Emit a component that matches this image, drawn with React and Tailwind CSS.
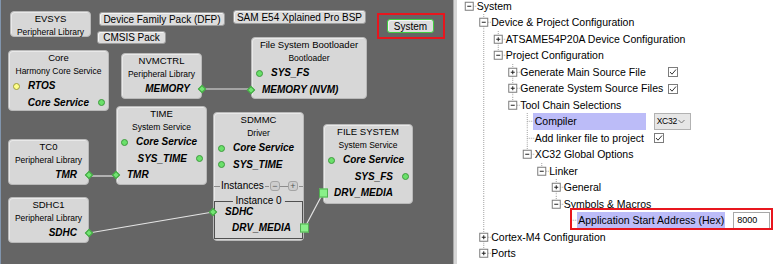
import React from 'react';
import clsx from 'clsx';

const treeRows = [
  { level: 0, kind: 'open', label: 'System' },
  { level: 1, kind: 'open', label: 'Device & Project Configuration' },
  { level: 2, kind: 'closed', label: 'ATSAME54P20A Device Configuration' },
  { level: 2, kind: 'open', label: 'Project Configuration' },
  { level: 3, kind: 'closed', label: 'Generate Main Source File', width: 'w-[148px]', check: true },
  { level: 3, kind: 'closed', label: 'Generate System Source Files', width: 'w-[148px]', check: true },
  { level: 3, kind: 'open', label: 'Tool Chain Selections' },
  { level: 4, kind: 'leaf', label: 'Compiler', width: 'w-[113px]', selected: true, combo: 'XC32' },
  { level: 4, kind: 'leaf', label: 'Add linker file to project', width: 'w-[119px]', check: true },
  { level: 4, kind: 'open', label: 'XC32 Global Options' },
  { level: 5, kind: 'open', label: 'Linker' },
  { level: 6, kind: 'closed', label: 'General' },
  { level: 6, kind: 'open', label: 'Symbols & Macros' },
  { level: 7, kind: 'leaf', label: 'Application Start Address (Hex)', width: 'w-[148px]', selected: true, field: '8000', marked: true },
  { level: 1, kind: 'closed', label: 'Cortex-M4 Configuration' },
  { level: 1, kind: 'closed', label: 'Ports' },
];

// true when a later row sits at `level` before the tree climbs above it
function continues(i, level) {
  for (let j = i + 1; j < treeRows.length; j++) {
    if (treeRows[j].level < level) return false;
    if (treeRows[j].level === level) return true;
  }
  return false;
}

function Guides({ index }) {
  const { level, kind } = treeRows[index];
  const W = 14.5;
  const H = 16.5;
  const mid = 8.25;
  const x = (c) => c * W + 7.25;
  const lines = [];
  for (let c = 0; c < level; c++) {
    if (continues(index, c)) lines.push(<line key={'v' + c} x1={x(c)} x2={x(c)} y1={0} y2={H} />);
  }
  if (level > 0) lines.push(<line key="t" x1={x(level)} x2={x(level)} y1={0} y2={mid} />);
  if (continues(index, level)) lines.push(<line key="b" x1={x(level)} x2={x(level)} y1={mid} y2={H} />);
  lines.push(<line key="h" x1={x(level)} x2={(level + 1) * W} y1={mid} y2={mid} />);

  return (
    <svg width={(level + 1) * W} height={H} className="shrink-0">
      <g stroke="#a3a3a3" strokeDasharray="1 1">{lines}</g>
      {kind !== 'leaf' && (
        <g>
          <rect x={x(level) - 4} y={mid - 4} width={8} height={8} fill="#fff" stroke="#7c7c7c" />
          <line x1={x(level) - 2} x2={x(level) + 2} y1={mid} y2={mid} stroke="#222" />
          {kind === 'closed' && <line x1={x(level)} x2={x(level)} y1={mid - 2} y2={mid + 2} stroke="#222" />}
        </g>
      )}
    </svg>
  );
}

function Check() {
  return (
    <span className="w-[10px] h-[10px] border border-[#7c7c7c] bg-white flex items-center justify-center shrink-0">
      <svg width="8" height="8" viewBox="0 0 8 8">
        <path d="M1 4 L3 6.2 L7 1.5" fill="none" stroke="#333" strokeWidth="1" />
      </svg>
    </span>
  );
}

function TreeRow({ index }) {
  const r = treeRows[index];
  return (
    <div className="relative flex items-center h-[16.5px] pl-[5.25px] text-[10.5px] text-black whitespace-nowrap">
      <Guides index={index} />
      <span
        className={clsx(
          'h-[16.5px] leading-[16.5px] shrink-0',
          r.width,
          r.selected && 'bg-[#bcbcf8]',
          r.selected && (r.level === 7 ? 'ml-[-1px] pl-[1px]' : 'ml-[-2px] pl-[2px]')
        )}
      >
        {r.label}
      </span>
      {r.check && <Check />}
      {r.combo && (
        <span className="ml-[8px] w-[37px] h-[17px] border border-[#b2b2b2] bg-[#e6e6e6] flex items-center pl-[2px] text-[8.5px] tracking-[-0.3px] shrink-0">
          {r.combo}
          <svg className="ml-auto mr-[5px]" width="7" height="5" viewBox="0 0 7 5">
            <path d="M0.5 1 L3.5 4 L6.5 1" fill="none" stroke="#777" strokeWidth="1" />
          </svg>
        </span>
      )}
      {r.field && (
        <span className="ml-[8px] w-[37px] h-[17px] border border-[#a8a8a8] bg-white flex items-center pl-[3px] text-[9px] shrink-0">
          {r.field}
        </span>
      )}
      {r.marked && <span className="absolute left-[113px] top-[-4.25px] w-[203px] h-[22px] border-2 border-[#e8161e]" />}
    </div>
  );
}

function Port({ label, kind = 'circle', side = 'left', row = 'h-[16.5px]', sym }) {
  const text = <span className="text-[10px] font-bold italic leading-none whitespace-nowrap">{label}</span>;
  if (kind === 'circle' || kind === 'yellow') {
    const dot = (
      <span
        className={clsx(
          'w-[7px] h-[7px] rounded-full border shrink-0',
          kind === 'yellow' ? 'bg-[#ffff8a] border-[#9d9d3c]' : 'bg-[#6ae06a] border-[#3f9a3f]'
        )}
      />
    );
    return side === 'left' ? (
      <div className={clsx(row, 'flex items-center pl-[3.5px] gap-[8.5px] shrink-0')}>{dot}{text}</div>
    ) : (
      <div className={clsx(row, 'flex items-center justify-end pr-[3.5px] gap-[8.5px] shrink-0')}>{text}{dot}</div>
    );
  }
  const shape =
    kind === 'diamond'
      ? 'w-[6px] h-[6px] rotate-45 bg-[#72e472] border border-[#3f9f3f]'
      : 'w-[9px] h-[9px] bg-[#8af08a] border border-[#52b052]';
  return (
    <div className={clsx(row, 'relative flex items-center shrink-0', side === 'left' ? 'pl-[10px]' : 'justify-end pr-[11px]')}>
      {text}
      <span className={clsx('absolute top-1/2 -translate-y-1/2', sym, shape)} />
    </div>
  );
}

function Node({ className, title, sub, children }) {
  return (
    <div className={clsx('absolute flex flex-col rounded-[4px] border border-[#b9b9b9] bg-[#d7d7d7] text-black shadow-[inset_1px_1px_0_#e9e9e9]', className)}>
      <div className="h-[13px] shrink-0 text-center text-[9.5px] leading-[13px] whitespace-nowrap">{title}</div>
      <div className="h-[14px] shrink-0 text-center text-[8.5px] leading-[14px] whitespace-nowrap">{sub}</div>
      {children}
    </div>
  );
}

function Btn({ className, children }) {
  return (
    <div className={clsx('absolute flex items-center justify-center rounded-[3px] border bg-[#dcdcdc] text-[10px] text-black whitespace-nowrap shadow-[inset_1px_1px_0_#f3f3f3]', className)}>
      {children}
    </div>
  );
}

function MiniBtn({ children }) {
  return (
    <span className="w-[10px] h-[10px] rounded-[3px] border border-[#a4a4a4] bg-[#cdcdcd] text-[9px] leading-none text-[#555] flex items-center justify-center shrink-0">
      {children}
    </span>
  );
}

export default function App() {
  return (
    <div className="w-[777px] h-[264px] flex overflow-hidden bg-white font-['Liberation_Sans',Arial,sans-serif]">
      {/* project graph canvas */}
      <div className="relative w-[453px] h-full shrink-0 bg-[#656565] shadow-[inset_1px_0_0_#8195ad]">
        <svg className="absolute inset-0 pointer-events-none" width="453" height="264">
          <g stroke="#e4e4e4" strokeWidth="1.2">
            <line x1="202" y1="89" x2="251" y2="89" />
            <line x1="89" y1="176" x2="116" y2="176" />
            <line x1="89" y1="233" x2="213" y2="212" />
            <line x1="304.5" y1="228" x2="322.5" y2="194" />
          </g>
        </svg>

        <Node className="left-[10px] top-[11px] w-[81px] h-[26px]" title="EVSYS" sub="Peripheral Library" />

        <Btn className="left-[99px] top-[12px] w-[126px] h-[14px] border-[#9c9c9c]">Device Family Pack (DFP)</Btn>
        <Btn className="left-[97px] top-[31px] w-[69px] h-[13px] border-[#9c9c9c]">CMSIS Pack</Btn>
        <Btn className="left-[233px] top-[10px] w-[133px] h-[14px] border-[#9c9c9c]">SAM E54 Xplained Pro BSP</Btn>
        <Btn className="left-[387px] top-[19px] w-[47px] h-[14px] border-[#3fcf3f]">System</Btn>
        <span className="absolute left-[377px] top-[13px] w-[68px] h-[26px] border-2 border-[#e8161e]" />

        <Node className="left-[8px] top-[50px] w-[101px] h-[61px]" title="Core" sub="Harmony Core Service">
          <Port kind="yellow" label="RTOS" />
          <Port side="right" label="Core Service" />
        </Node>

        <Node className="left-[121px] top-[53px] w-[81px] h-[46px]" title="NVMCTRL" sub="Peripheral Library">
          <Port kind="diamond" side="right" label="MEMORY" sym="right-[-4px]" />
        </Node>

        <Node className="left-[251px] top-[37px] w-[116px] h-[62px]" title="File System Bootloader" sub="Bootloader">
          <Port label="SYS_FS" />
          <Port kind="diamond" label="MEMORY (NVM)" sym="left-[-4px]" />
        </Node>

        <Node className="left-[116px] top-[106px] w-[91px] h-[79px]" title="TIME" sub="System Service">
          <Port label="Core Service" />
          <Port side="right" label="SYS_TIME" />
          <Port kind="diamond" label="TMR" sym="left-[-4px]" />
        </Node>

        <Node className="left-[8px] top-[139px] w-[81px] h-[46px]" title="TC0" sub="Peripheral Library">
          <Port kind="diamond" side="right" label="TMR" sym="right-[-4px]" />
        </Node>

        <Node className="left-[8px] top-[197px] w-[81px] h-[46px]" title="SDHC1" sub="Peripheral Library">
          <Port kind="diamond" side="right" label="SDHC" sym="right-[-4px]" />
        </Node>

        <Node className="left-[213px] top-[112px] w-[91px] h-[129px]" title="SDMMC" sub="Driver">
          <Port label="Core Service" />
          <Port label="SYS_TIME" />
          <div className="mt-[6px] h-[14px] flex items-center shrink-0">
            <span className="w-[6px] h-px bg-[#8c8c8c] shrink-0" />
            <span className="text-[10px] leading-none ml-[1px]">Instances</span>
            <span className="flex-1 h-px bg-[#8c8c8c] mx-[1px]" />
            <MiniBtn>−</MiniBtn>
            <span className="w-[8px] h-px bg-[#8c8c8c] shrink-0" />
            <MiniBtn>+</MiniBtn>
            <span className="flex-1 h-px bg-[#8c8c8c] ml-[1px]" />
          </div>
          <div className="relative mt-[8px] flex flex-col border border-[#505050] pt-[2px] pb-[2px] shrink-0">
            <span className="absolute left-1/2 top-[-7px] -translate-x-1/2 bg-[#d7d7d7] px-[3px] text-[10px] leading-[12px] whitespace-nowrap">
              Instance 0
            </span>
            <Port kind="diamond" label="SDHC" row="h-[16px]" sym="left-[-5px]" />
            <Port kind="square" side="right" label="DRV_MEDIA" row="h-[16px]" sym="right-[-6.5px]" />
          </div>
        </Node>

        <Node className="left-[323px] top-[124px] w-[90px] h-[80px]" title="FILE SYSTEM" sub="System Service">
          <Port label="Core Service" />
          <Port side="right" label="SYS_FS" />
          <Port kind="square" label="DRV_MEDIA" sym="left-[-5.5px]" />
        </Node>
      </div>

      {/* splitter */}
      <div className="w-[4px] h-full shrink-0 bg-[#d6d6d6] border-l border-[#a8a8a8]" />

      {/* configuration tree */}
      <div className="flex-1 h-full overflow-hidden bg-white">
        <div className="mt-[-2.25px]">
          {treeRows.map((r, i) => (
            <TreeRow key={i} index={i} />
          ))}
        </div>
      </div>
    </div>
  );
}
